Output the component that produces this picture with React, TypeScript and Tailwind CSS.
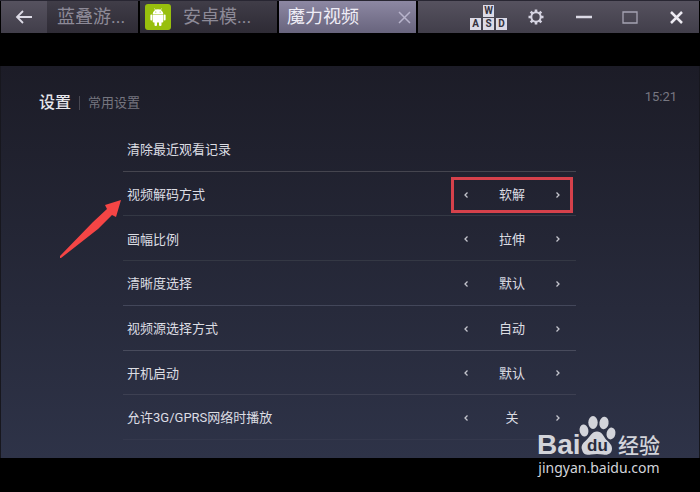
import type { ReactNode } from "react";

const settings = [
  { label: "清除最近观看记录", value: "", line: "border-[#45454f]" },
  { label: "视频解码方式", value: "软解", line: "border-[#343844]", marked: true },
  { label: "画幅比例", value: "拉伸", line: "border-[#343844]" },
  { label: "清晰度选择", value: "默认", line: "border-[#43475a]" },
  { label: "视频源选择方式", value: "自动", line: "border-[#484b5c]" },
  { label: "开机启动", value: "默认", line: "border-[#3d4052]" },
  { label: "允许3G/GPRS网络时播放", value: "关", line: "border-[#34384c]" },
];

function Key({ children }: { children: ReactNode }) {
  return (
    <span className="flex h-3 w-[11px] items-center justify-center bg-[#dcdae6] text-[10px] leading-3 font-bold text-[#35323f]">
      {children}
    </span>
  );
}

function Step({ label, d }: { label: string; d: string }) {
  return (
    <button type="button" aria-label={label} className="flex h-5 w-3 items-center justify-center text-[#c4c5cd]">
      <svg width="6" height="8" viewBox="0 0 6 8" fill="none" stroke="currentColor" strokeWidth="1.3">
        <path d={d} />
      </svg>
    </button>
  );
}

function TitleBar() {
  return (
    <header className="flex h-[33px] shrink-0 border-t border-[#282632] bg-black pr-px pl-px text-lg">
      <button type="button" aria-label="返回" className="flex w-[46px] shrink-0 items-center justify-center bg-linear-to-b from-[#56525f] to-[#413e4a]">
        <svg width="18" height="16" viewBox="0 0 18 16" fill="none" stroke="#dddbe6" strokeWidth="1.8">
          <path d="M8 2 2 8l6 6M2 8h15" />
        </svg>
      </button>
      <button type="button" className="w-[91px] shrink-0 bg-linear-to-b from-[#403d48] to-[#2e2b35] pl-[10px] text-left text-[#8d8a97]">
        蓝叠游...
      </button>
      <button type="button" className="ml-0.5 flex w-[137px] shrink-0 items-center gap-3 bg-linear-to-b from-[#403d48] to-[#2e2b35] pl-[5px] text-[#8d8a97]">
        <svg width="26" height="26" viewBox="0 0 26 26">
          <rect width="26" height="26" rx="3" fill="#98bf0d" />
          <g fill="#fff">
            <path d="M7.700 10a5.300 4.700 0 0 1 10.600 0z" />
            <path d="M7.700 10.500h10.600v7a1 1 0 0 1-1 1H8.700a1 1 0 0 1-1-1z" />
            <rect x="5.400" y="10.500" width="1.900" height="6" rx="0.900" />
            <rect x="18.700" y="10.500" width="1.900" height="6" rx="0.900" />
            <rect x="9.500" y="16" width="2.500" height="6" rx="1" />
            <rect x="14" y="16" width="2.500" height="6" rx="1" />
          </g>
          <path d="m9.500 4.500 1.200 2M16.500 4.500l-1.200 2" stroke="#fff" strokeWidth="0.700" />
          <circle cx="10.800" cy="8" r="0.600" fill="#98bf0d" />
          <circle cx="15.200" cy="8" r="0.600" fill="#98bf0d" />
        </svg>
        安卓模...
      </button>
      <div className="ml-0.5 flex w-[137px] shrink-0 items-center justify-between bg-linear-to-b from-[#8d88a3] to-[#68647d] pr-[5px] pl-2 text-[#efedf6]">
        <button type="button">魔力视频</button>
        <button type="button" aria-label="关闭标签">
          <svg width="13" height="13" viewBox="0 0 13 13" stroke="#b8b4cc" strokeWidth="1.5">
            <path d="m1 1 11 11M12 1 1 12" />
          </svg>
        </button>
      </div>
      <div className="ml-0.5 flex min-w-0 flex-1 items-center justify-end bg-linear-to-b from-[#56525f] to-[#413e4a] pr-4">
        <button type="button" aria-label="键盘映射" className="mr-[21px] flex flex-col items-center gap-px">
          <Key>W</Key>
          <span className="flex gap-0.5">
            <Key>A</Key>
            <Key>S</Key>
            <Key>D</Key>
          </span>
        </button>
        <button type="button" aria-label="设置" className="mr-8">
          <svg width="16" height="16" viewBox="0 0 16 16" fill="none" stroke="#d6d4e2">
            <circle cx="8" cy="8" r="4.700" strokeWidth="2" />
            <g strokeWidth="2.600">
              <path d="M8 .5v3M8 12.500v3M.5 8h3M12.500 8h3" />
              <path d="m2.700 2.700 2 2M11.300 11.300l2 2M2.700 13.300l2-2M11.300 4.700l2-2" />
            </g>
          </svg>
        </button>
        <button type="button" aria-label="最小化" className="mr-[30px]">
          <svg width="16" height="16" viewBox="0 0 16 16" stroke="#dcdae6" strokeWidth="2.500">
            <path d="M0 8h16" />
          </svg>
        </button>
        <button type="button" aria-label="最大化" className="mr-8">
          <svg width="16" height="13" viewBox="0 0 16 13" fill="none" stroke="#a5a2b2" strokeWidth="1.300">
            <path d="M1 1h14v11H1z" />
          </svg>
        </button>
        <button type="button" aria-label="关闭">
          <svg width="13" height="13" viewBox="0 0 13 13" stroke="#eceaf2" strokeWidth="2.500">
            <path d="m1 1 11 11M12 1 1 12" />
          </svg>
        </button>
      </div>
    </header>
  );
}

function Watermark() {
  return (
    <div className="absolute right-[40px] bottom-[14px] flex flex-col items-center text-[#d3d4da]">
      <svg className="overflow-visible" width="122" height="42" viewBox="0 0 122 42" fill="currentColor" role="img" aria-label="Baidu 经验">
        <text x="-1" y="38" fontFamily="Liberation Sans, sans-serif" fontWeight="700" fontSize="28">Bai</text>
        <ellipse cx="46" cy="14.500" rx="4.400" ry="6" transform="rotate(-10 46 14.500)" />
        <ellipse cx="55" cy="6.500" rx="4.700" ry="6.400" />
        <ellipse cx="66" cy="7" rx="4.600" ry="6.200" transform="rotate(8 66 7)" />
        <ellipse cx="73" cy="17.500" rx="4.400" ry="6" transform="rotate(12 73 17.500)" />
        <path d="M59 15.500c-5 0-7 5-11 9-4 3-5 6-4 9 1 5 5 6 9 5 4-.7 8-.7 12 0 5 1 9-1 9-6 0-4-3-6-6-9-3-4-4-8-9-8z" />
        <text x="49" y="35" fill="#292c3d" fontFamily="Liberation Sans, sans-serif" fontWeight="700" fontSize="17">du</text>
        <text x="80" y="37" fontFamily="Noto Sans CJK SC, sans-serif" fontWeight="500" fontSize="21">经验</text>
      </svg>
      <span className="font-['Noto_Sans',sans-serif] text-sm leading-5">jingyan.baidu.com</span>
    </div>
  );
}

export default function App() {
  return (
    <div className="relative flex h-screen flex-col bg-black font-[Roboto,'Noto_Sans_CJK_SC',sans-serif]">
      <TitleBar />
      <main className="mt-[33px] mb-[34px] flex min-h-0 flex-1 flex-col border-x border-[#17171e] bg-linear-to-b from-[#1c1c27] to-[#2e3348] pb-[18px]">
        <div className="flex h-[61px] shrink-0 items-start justify-between pr-[22px] pl-[38px]">
          <div className="flex items-center pt-[25px]">
            <h1 className="text-base leading-6 font-medium text-[#e6e6ea]">设置</h1>
            <span className="mx-2 h-[14px] w-px bg-[#484852]" />
            <h2 className="text-[13px] leading-6 text-[#75757f]">常用设置</h2>
          </div>
          <time className="pt-[21px] text-[13px] text-[#777781]">15:21</time>
        </div>
        <div className="relative mr-[123px] ml-[122px] grid min-h-0 flex-1 grid-rows-7 text-[13px] text-[#dcdde3]">
          {settings.map((s) => (
            <div key={s.label} className={"flex min-h-0 items-center justify-between border-b pt-0.5 pl-1 " + s.line}>
              <span>{s.label}</span>
              {s.value && (
                <div
                  role="group"
                  aria-label={s.label}
                  className={
                    "mr-[3px] flex h-9 w-[122px] items-center justify-between border-3 px-[6px] " +
                    (s.marked ? "border-[#d5414b]" : "border-transparent")
                  }
                >
                  <Step label="上一项" d="M4.500 1.500 2 4l2.500 2.500" />
                  <output>{s.value}</output>
                  <Step label="下一项" d="M1.500 1.500 4 4 1.500 6.500" />
                </div>
              )}
            </div>
          ))}
          <svg className="absolute top-[72px] -left-[64px]" width="64" height="60" viewBox="0 0 64 60" fill="#f54545">
            <path d="M62 1 46 6l2 4-14 13L1 57v2h1l37-29 14-14 4 2z" />
          </svg>
        </div>
      </main>
      <Watermark />
    </div>
  );
}
